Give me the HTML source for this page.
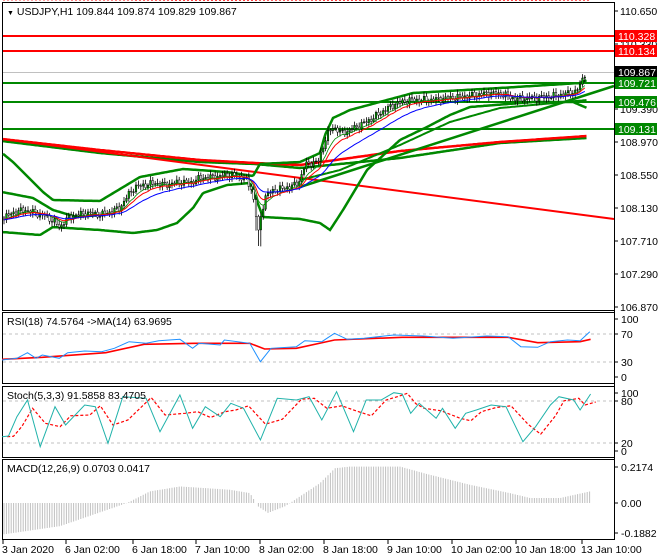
<!DOCTYPE html>
<html><head><meta charset="utf-8"><style>
body{margin:0;background:#fff;width:660px;height:560px;overflow:hidden}
svg{display:block}
text{font-family:"Liberation Sans",sans-serif;font-size:10.5px;fill:#000}
</style></head><body>
<svg id="s" width="660" height="560" xmlns="http://www.w3.org/2000/svg"></svg>
<script>
var S=document.getElementById('s');var out='';
function add(s){out+=s;}
function interp(p,x){if(x<=p[0][0])return p[0][1];for(var i=1;i<p.length;i++){if(x<=p[i][0]){var a=p[i-1],b=p[i];return a[1]+(b[1]-a[1])*(x-a[0])/(b[0]-a[0]);}}return p[p.length-1][1];}
function pl(p,col,w,dash){var d=p.map(function(q){return q[0].toFixed(1)+','+q[1].toFixed(1)}).join(' ');add('<polyline points="'+d+'" fill="none" stroke="'+col+'" stroke-width="'+w+'"'+(dash?' stroke-dasharray="'+dash+'"':'')+'/>');}
function curve(p,col,w,x0,x1,dash){var a=[];for(var x=x0;x<=x1;x+=1.5)a.push([x,interp(p,x)]);pl(a,col,w,dash);}
function disp(p,fx,fy){return p.map(function(q){return [q[0]*fx,fy(q[1])]});}
// frames
add('<rect x="2.5" y="2.5" width="612" height="308" fill="none" stroke="#000"/>');
add('<rect x="2.5" y="312.5" width="612" height="71" fill="none" stroke="#000"/>');
add('<rect x="2.5" y="386.5" width="612" height="71" fill="none" stroke="#000"/>');
add('<rect x="2.5" y="459.5" width="612" height="80" fill="none" stroke="#000"/>');
var P=[[3,218],[15,212],[25,210],[35,213],[45,216],[55,222],[60,228],[65,220],[75,215],[90,213],[100,215],[110,212],[120,208],[128,195],[135,187],[145,185],[155,183],[165,185],[180,182],[190,183],[200,178],[215,177],[230,175],[245,178],[252,190],[256,215],[258,235],[262,210],[266,195],[275,190],[285,188],[295,185],[300,180],[305,165],[310,163],[318,162],[322,150],[327,135],[333,127],[342,133],[350,130],[360,125],[370,120],[385,110],[395,104],[410,100],[430,100],[450,98],[470,96],[490,93],[505,95],[515,99],[530,98],[545,97],[560,95],[575,92],[580,86],[583,76],[586,72]];
add('<line x1="3" y1="72.5" x2="614" y2="72.5" stroke="#c0c0c0"/>');
[[36,'#f00'],[51,'#f00'],[83,'#080'],[102,'#080'],[129,'#080']].forEach(function(l){add('<line x1="3" y1="'+l[0]+'" x2="614" y2="'+l[0]+'" stroke="'+l[1]+'" stroke-width="2"/>');});
curve([[2,141],[100,153],[200,162],[255,164],[300,168],[400,158],[500,143],[587,138]],'#080',2.5,3,587);
curve([[2,139],[100,150],[200,160],[255,163],[300,165],[400,151],[500,142],[587,136]],'#f00',2.5,3,587);
add('<line x1="3" y1="139" x2="614" y2="219" stroke="#f00" stroke-width="2"/>');
// bollinger upper
curve([[2,153],[13,162],[43,192],[53,200],[100,201],[140,177],[183,169],[227,172],[253,176],[260,164],[300,162],[320,153],[325,135],[333,118],[350,110],[413,93],[500,88],[580,83],[587,80]],'#080',2.5,3,587);
// second line
curve([[2,192],[33,198],[53,210],[77,217],[100,215]],'#080',2.5,3,100);
// lower
curve([[2,232],[40,235],[53,227],[67,228],[100,230],[133,233],[157,230],[177,223],[193,208],[203,193],[227,185],[250,183],[263,217],[300,219],[320,223],[330,230],[343,210],[367,170],[400,140],[427,127],[450,115],[470,107],[533,102],[573,102],[587,108]],'#080',2.5,3,587);
add('<line x1="300" y1="187" x2="614" y2="86" stroke="#080" stroke-width="2.5"/>');
curve([[300,180],[340,170],[400,145],[450,122],[500,108],[587,100]],'#080',2,300,587);
var closes=[];var prev=interp(P,3);
for(var x=4;x<=586;x+=2.4){var c=interp(P,x)+Math.sin(x*1.7)*2.2+Math.sin(x*0.53)*1.5;closes.push([x,c]);var o=prev;var hi=Math.min(o,c)-1.5-Math.abs(Math.sin(x*3.1))*3;var lo=Math.max(o,c)+1.5+Math.abs(Math.cos(x*2.3))*3;if(x>255&&x<262)lo+=12;
add('<line x1="'+x.toFixed(1)+'" y1="'+hi.toFixed(1)+'" x2="'+x.toFixed(1)+'" y2="'+lo.toFixed(1)+'" stroke="#000" stroke-width="0.8"/>');
add('<rect x="'+(x-0.8).toFixed(1)+'" y="'+Math.min(o,c).toFixed(1)+'" width="1.6" height="'+Math.max(0.8,Math.abs(o-c)).toFixed(1)+'" fill="'+(c<o?'#0a0':'#fff')+'" stroke="#000" stroke-width="0.5"/>');prev=c;}
function ema(arr,n){var k=2/(n+1),v=arr[0][1],r=[];arr.forEach(function(q){v=v+k*(q[1]-v);r.push([q[0],v]);});return r;}
pl(ema(closes,8),'#080',0.8);pl(ema(closes,12),'#f00',1);pl(ema(closes,24),'#00f',1);
add('<rect x="615" y="0" width="45" height="560" fill="#fff"/>');
add('<line x1="614.5" y1="2" x2="614.5" y2="540" stroke="#000"/>');
[[11,'110.650'],[44,'110.330'],[109,'109.390'],[142,'108.970'],[175,'108.550'],[208,'108.130'],[241,'107.710'],[274,'107.290'],[307,'106.870']].forEach(function(l){add('<line x1="614" y1="'+l[0]+'" x2="618" y2="'+l[0]+'" stroke="#000"/><text x="620" y="'+(l[0]+4)+'">'+l[1]+'</text>');});
[[36,'110.328','#f00','#fff'],[51,'110.134','#f00','#fff'],[72,'109.867','#000','#fff'],[83,'109.721','#080','#fff'],[102,'109.476','#080','#fff'],[129,'109.131','#080','#fff']].forEach(function(l){add('<rect x="615" y="'+(l[0]-6)+'" width="42" height="12" fill="'+l[2]+'"/><text x="618" y="'+(l[0]+4)+'" style="fill:'+l[3]+'">'+l[1]+'</text>');});
add('<text x="7" y="15"><tspan style="font-size:7px">&#9660;</tspan> USDJPY,H1  109.844 109.874 109.829 109.867</text>');
var ry=function(v){return 300+v/3;};var fx=0.4234;
[334,362].forEach(function(y){add('<line x1="3" y1="'+y+'" x2="614" y2="'+y+'" stroke="#c0c0c0" stroke-dasharray="3,3"/>');});
pl(disp([[5,178],[100,172],[250,158],[340,133],[460,130],[590,130],[625,147],[700,145],[790,120],[950,112],[1200,112],[1270,128],[1370,125],[1395,118]],fx,ry),'#f00',1.6);
pl(disp([[5,180],[40,175],[65,158],[85,175],[100,165],[140,175],[160,158],[200,153],[240,155],[270,145],[305,125],[345,130],[375,122],[425,118],[455,145],[470,130],[520,135],[530,120],[590,130],[615,185],[640,145],[700,140],[720,122],[760,125],[790,100],[820,118],[860,115],[930,105],[1000,108],[1070,115],[1150,108],[1200,110],[1230,140],[1270,142],[1300,125],[1340,120],[1370,122],[1393,95]],fx,ry),'#1e90ff',1);
add('<text x="7" y="325">RSI(18) 74.5764  -&gt;MA(14) 63.9695</text>');
[[319,'100'],[334,'70'],[362,'30'],[377,'0']].forEach(function(l){add('<line x1="614" y1="'+l[0]+'" x2="618" y2="'+l[0]+'" stroke="#000"/><text x="621" y="'+(l[0]+4)+'">'+l[1]+'</text>');});
[401,443].forEach(function(y){add('<line x1="3" y1="'+y+'" x2="614" y2="'+y+'" stroke="#c0c0c0" stroke-dasharray="3,3"/>');});
var st=[[5,410],[20,408],[40,350],[65,300],[95,440],[130,320],[155,375],[200,315],[225,320],[255,430],[290,290],[345,295],[378,395],[425,285],[455,385],[485,320],[520,350],[545,310],[575,325],[615,420],[655,295],[700,300],[730,290],[760,360],[795,275],[835,395],[865,300],[900,300],[930,278],[950,282],[970,340],[990,310],[1030,355],[1045,325],[1075,385],[1100,340],[1125,330],[1160,315],[1195,320],[1235,425],[1265,380],[1300,315],[1320,290],[1355,300],[1370,330],[1395,282]];
var sig=st.map(function(q,i){var a=st[Math.max(0,i-1)][1];return [q[0]+12,(q[1]+a)/2];});
pl(disp(sig,fx,ry),'#f00',1.2,'3,2');
pl(disp(st,fx,ry),'#20b2aa',1);
add('<text x="7" y="399">Stoch(5,3,3) 91.5858 83.4705</text>');
[[393,'100'],[401,'80'],[443,'20'],[451,'0']].forEach(function(l){add('<line x1="614" y1="'+l[0]+'" x2="618" y2="'+l[0]+'" stroke="#000"/><text x="621" y="'+(l[0]+4)+'">'+l[1]+'</text>');});
var mz=503,ms=(503-467)/0.2174;
var H=[[3,-0.19],[60,-0.14],[127,0],[150,0.07],[180,0.1],[230,0.08],[250,0.06],[258,-0.02],[268,-0.06],[285,-0.02],[300,0.04],[320,0.12],[335,0.21],[350,0.22],[400,0.22],[430,0.17],[470,0.11],[510,0.06],[530,0.03],[560,0.03],[590,0.07]];
for(var x=4;x<=590;x+=2.4){var v=interp(H,x);add('<line x1="'+x.toFixed(1)+'" y1="'+mz+'" x2="'+x.toFixed(1)+'" y2="'+(mz-v*ms).toFixed(1)+'" stroke="#c0c0c0" stroke-width="1"/>');}
var SG=[[3,-0.17],[20,-0.19],[60,-0.16],[127,-0.07],[180,0.07],[200,0.1],[230,0.07],[255,0.06],[270,-0.01],[290,-0.02],[320,0.05],[360,0.19],[370,0.22],[410,0.22],[440,0.19],[500,0.12],[540,0.06],[560,0.04],[590,0.05]];
curve(SG,'#f00',1.2,3,590,'2,2');
add('<text x="7" y="472">MACD(12,26,9) 0.0703 0.0417</text>');
[[467,'0.2174'],[503,'0.00'],[533,'-0.1882']].forEach(function(l){add('<line x1="614" y1="'+l[0]+'" x2="618" y2="'+l[0]+'" stroke="#000"/><text x="621" y="'+(l[0]+4)+'">'+l[1]+'</text>');});
[[3,'3 Jan 2020'],[66,'6 Jan 02:00'],[133,'6 Jan 18:00'],[196,'7 Jan 10:00'],[260,'8 Jan 02:00'],[324,'8 Jan 18:00'],[388,'9 Jan 10:00'],[452,'10 Jan 02:00'],[516,'10 Jan 18:00'],[582,'13 Jan 10:00']].forEach(function(l){add('<line x1="'+l[0]+'" y1="540" x2="'+l[0]+'" y2="544" stroke="#000"/><text x="'+(l[0]-1)+'" y="553">'+l[1]+'</text>');});
S.innerHTML=out;
</script>
</body></html>
